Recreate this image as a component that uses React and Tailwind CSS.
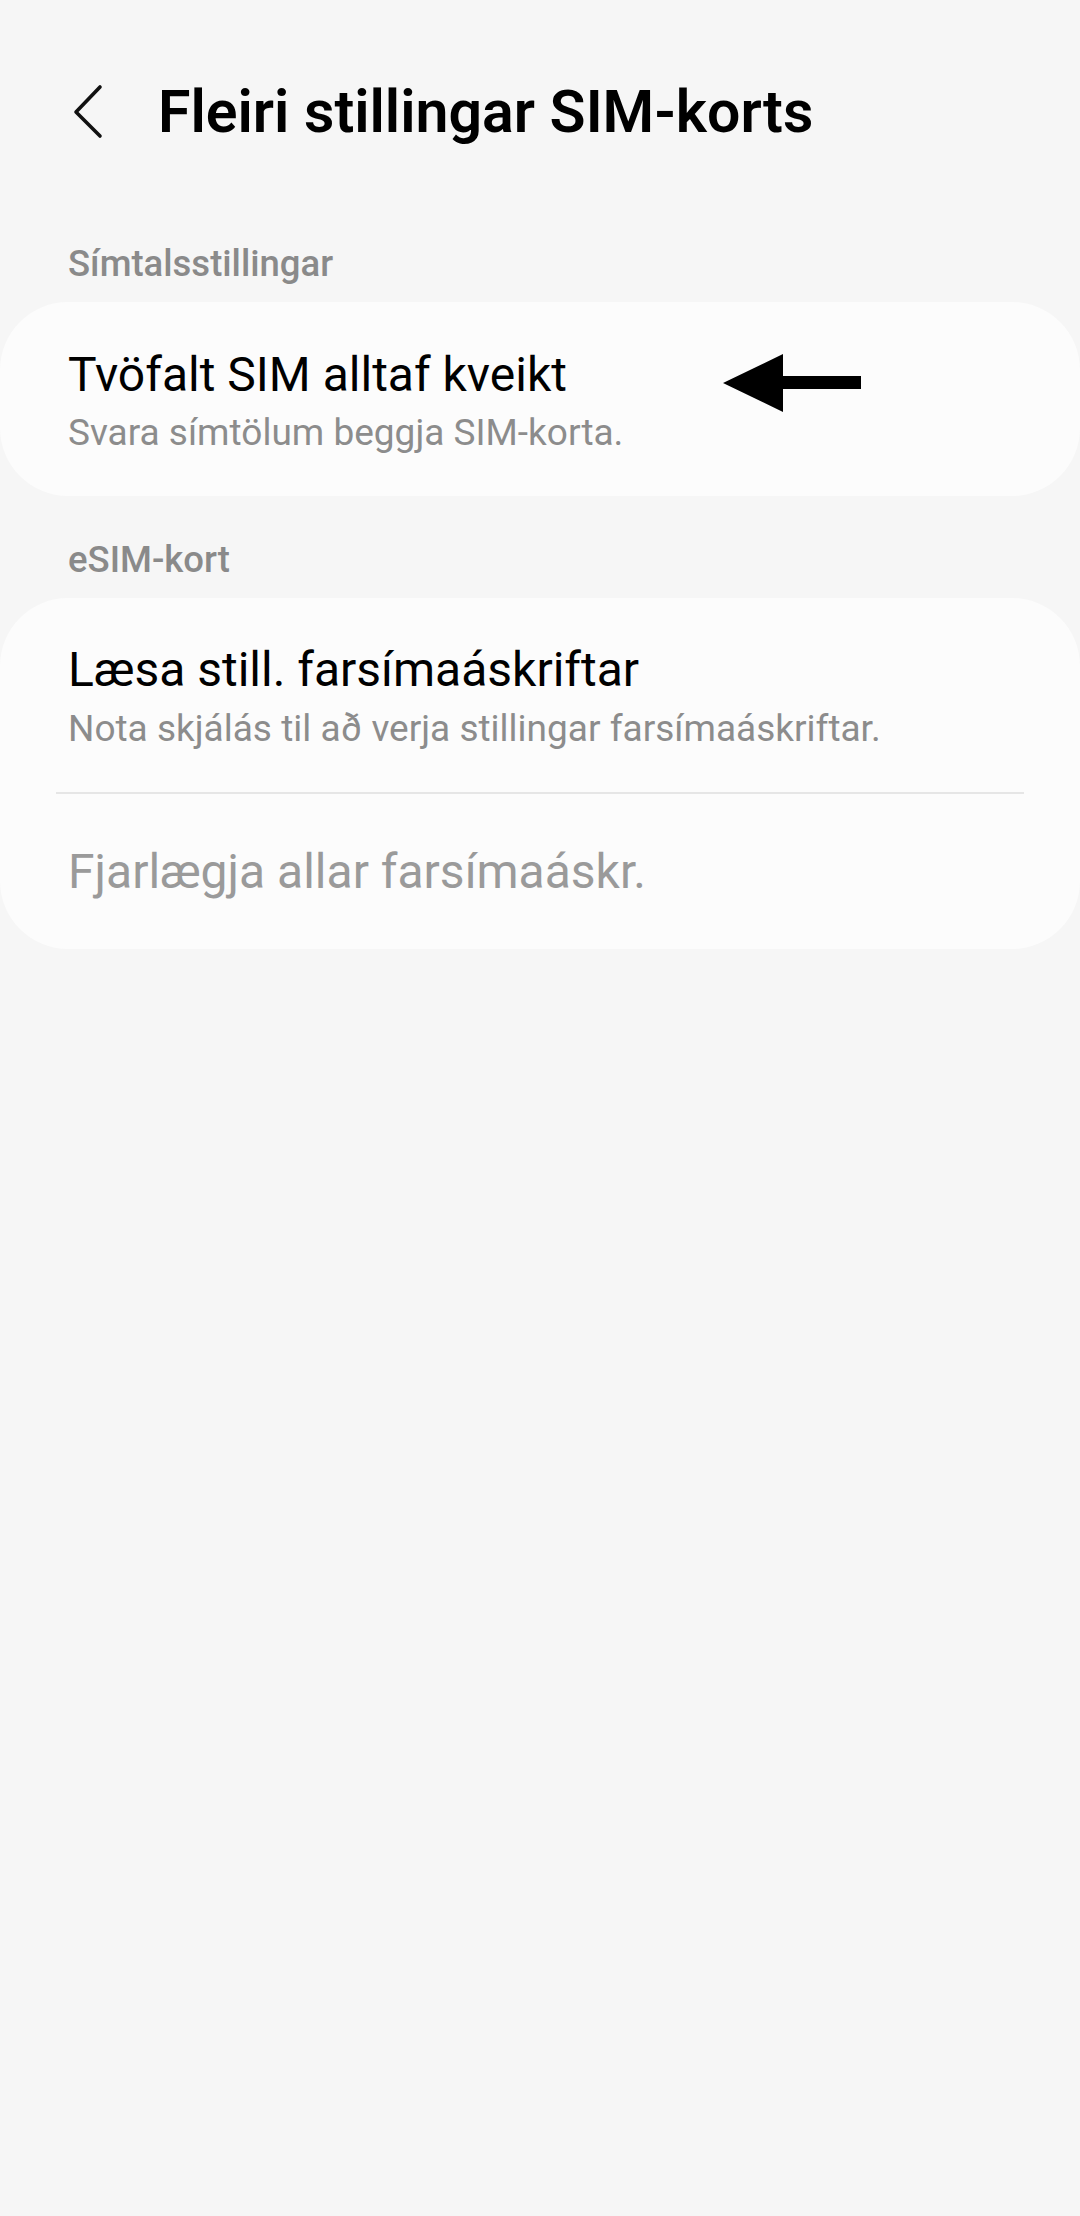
import React from "react";

const font = { fontFamily: "Roboto, 'Noto Sans', sans-serif" };

/** Thin back chevron in the app bar. */
function BackIcon() {
  return (
    <svg width="40" height="60" viewBox="0 0 40 60" className="shrink-0">
      <path d="M34 14 L10 39 L34 63" transform="translate(0 -9)" fill="none" stroke="#111" strokeWidth="3.6" strokeLinecap="round" strokeLinejoin="round" />
    </svg>
  );
}

/** Black annotation arrow pointing left. */
function PointerArrow() {
  return (
    <svg width="140" height="58" viewBox="0 0 140 58" className="ml-[156px] translate-y-[8px]">
      <polygon points="0,29 60,0 60,22 138,22 138,35 60,35 60,58" fill="#000" />
    </svg>
  );
}

function SectionLabel({ children, className }) {
  return (
    <div className={"px-[68px] text-[36.5px] font-medium leading-[42px] text-[#8a8a8a] " + className}>
      {children}
    </div>
  );
}

export default function App() {
  return (
    <div className="min-h-[2216px] w-full bg-[#f6f6f6]" style={font}>
      <header className="flex h-[224px] items-center pl-[66px]">
        <BackIcon />
        <h1 className="ml-[52px] text-[59px] font-semibold leading-[70px] text-[#000]">
          Fleiri stillingar SIM-korts
        </h1>
      </header>

      <SectionLabel className="pt-[19px]">Símtalsstillingar</SectionLabel>

      <section className="mt-[17px] rounded-[68px] bg-[#fcfcfc] px-[68px] pb-[41px] pt-[44px]">
        <div className="flex h-[58px] items-center">
          <div className="text-[48px] leading-[58px] text-[#000]">Tvöfalt SIM alltaf kveikt</div>
          <PointerArrow />
        </div>
        <div className="mt-[7px] text-[37px] leading-[44px] text-[#8c8c8c]">
          Svara símtölum beggja SIM-korta.
        </div>
      </section>

      <SectionLabel className="mt-[43px]">eSIM-kort</SectionLabel>

      <section className="mt-[17px] rounded-[68px] bg-[#fcfcfc] pb-[48px] pt-[43px]">
        <div className="px-[68px]">
          <div className="text-[48px] leading-[58px] text-[#000]">Læsa still. farsímaáskriftar</div>
          <div className="mt-[8px] text-[37px] leading-[44px] text-[#8c8c8c]">
            Nota skjálás til að verja stillingar farsímaáskriftar.
          </div>
        </div>
        <div className="mx-[56px] mt-[41px] h-[2px] bg-[#e6e6e6]" />
        <div className="mt-[49px] px-[68px] text-[48px] leading-[58px] text-[#9a9a9a]">
          Fjarlægja allar farsímaáskr.
        </div>
      </section>
    </div>
  );
}
